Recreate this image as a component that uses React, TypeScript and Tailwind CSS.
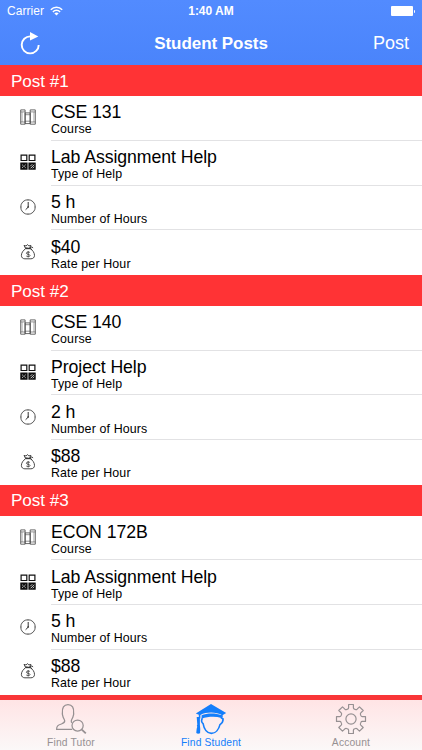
import React from 'react';

const POSTS = [
  { id: 1, course: 'CSE 131', help: 'Lab Assignment Help', hours: '5 h', rate: '$40' },
  { id: 2, course: 'CSE 140', help: 'Project Help', hours: '2 h', rate: '$88' },
  { id: 3, course: 'ECON 172B', help: 'Lab Assignment Help', hours: '5 h', rate: '$88' },
];

function BooksIcon() {
  return (
    <svg className="w-4 h-4" viewBox="0 0 16 16" fill="none" stroke="#444" strokeWidth="0.8">
      <path d="M.7.9h4.4v14.3H.7zM5.1 3.9h5.1v10.7H5.1zM10.2.9h5.1v14.3h-5.1z" />
      <path d="M.7 2.9h4.4M.7 13h4.4M10.2 2.9h5.1M10.2 13h5.1M5.1 5.7h5.1M5.1 12.2h5.1" strokeWidth="0.6" />
      <path d="M2.1 3v10M13.9 3v10" strokeWidth="0.4" />
    </svg>
  );
}

function GridIcon() {
  return (
    <svg className="w-4 h-4" viewBox="0 0 16 16" fill="none" stroke="#111" strokeWidth="1.2">
      <path d="M1.1 1.1h5.7v5.4H1.1zM9.2 1.1h5.7v5.4H9.2z" />
      <path d="M.9 9.1h6.1v6H.9zM9 9.1h6.1v6H9z" fill="#111" />
      <path d="M2.2 10.8l1 .8M5.6 10.8l-1 .8M2.2 13.7l1-.8M5.6 13.7l-1-.8M3.5 12.2h.9M10.2 12.3l2-2M10.6 14.3l3.6-3.6M12.7 14.2l1.6-1.6" stroke="#fff" strokeWidth="0.8" />
    </svg>
  );
}

function ClockIcon() {
  return (
    <svg className="w-4 h-4" viewBox="0 0 16 16" fill="none" stroke="#333" strokeWidth="0.8">
      <circle cx="8" cy="8" r="7.3" />
      <path d="M8.2 3v5.2L5.6 10.7" strokeWidth="1" />
      <circle cx="8.1" cy="8.1" r=".8" fill="#222" stroke="none" />
      <path d="M8 1v1M8 14v1M1 8h1M14 8h1" strokeWidth="0.5" />
    </svg>
  );
}

function MoneyIcon() {
  return (
    <svg className="w-4 h-4" viewBox="0 0 16 16" fill="none" stroke="#333" strokeWidth="0.9">
      <path d="M5.6 4.7C3.2 6.4 1.4 8.8 1.4 11.4c0 2.2 1.5 3.4 3.5 3.4h6c2.1 0 3.6-1.2 3.6-3.4 0-2.7-1.7-5-4.1-6.7z" />
      <path d="M5.6 4.5L4 1.4l2.1.6L7.4.6l1.5 1.3 2-.5-1.5 3zM5.3 3.7l5 .9M9.8 3.8l2.2-1 1 1.3M10 4.4l2.1 1.2" />
      <path d="M9.9 8.5c-.6-.7-3.5-.9-3.5.7 0 1.6 3.6.7 3.6 2.3 0 1.5-2.9 1.4-3.7.5M8.2 7.1v6.2" strokeWidth="0.8" />
    </svg>
  );
}

function FindTutorIcon() {
  return (
    <svg className="w-8 h-8" viewBox="0 0 32 32" fill="none" stroke="#969092" strokeWidth="1.25" strokeLinejoin="round">
      <path d="M17.2 26.4H1.6c0-3.4 1.2-4.3 4.8-5.4 2.2-.8 3.5-1.4 3.3-3.2-.3-1.6-1.4-2.5-1.8-4.5-.4-1.2-.7-1.7-.5-3.1C6.9 4.8 8.8 1.5 13 1.5s6.2 3.3 5.6 8.7c.3 1.4-.1 2-.5 3.1-.4 2-1.5 2.9-1.8 4.5-.1.9.1 1.5.6 1.9" />
      <circle cx="22.6" cy="22.6" r="5.6" />
      <path d="M26.8 26.6l4 3.7" strokeWidth="1.8" />
    </svg>
  );
}

function FindStudentIcon() {
  return (
    <svg className="w-8 h-8" viewBox="0 0 32 32" fill="none" stroke="#147efb">
      <path d="M.8 10.5L16 1l15.2 9-3.8 2.2c-6.3-3.4-15.8-3.5-22-.3v3.7H3.8v-3.8z" fill="#147efb" stroke="none" />
      <path d="M6.6 12.3c5.4-2.4 14.4-2.4 19.8 0v2.6c-5.9-1.6-13.4-1.4-19.8.8z" fill="#147efb" stroke="none" />
      <path d="M1.7 14h3.2v8c.4 2.8.5 5.3.2 8.2-1.4.7-2.8.6-3.8-.1.2-2.6.3-4.6 1-6.3-.6-.8-.4-1.6 0-2z" fill="#147efb" stroke="none" />
      <path d="M7.4 15.2c-1.1 1.7-.9 4 .7 5.4.9 5.3 3.9 9.8 8.3 9.8 4.2 0 7.4-4.1 8.6-8.8 2.2-1.3 3.1-3.2 3.1-5.6l-1.6-1.1c.7-1.2.8-2 .1-3.2" strokeWidth="1.6" />
    </svg>
  );
}

function GearIcon() {
  return (
    <svg className="w-8 h-8" viewBox="0 0 32 32" fill="none" stroke="#969092" strokeWidth="1.2" strokeLinejoin="round">
      <path d="M13.6 1.5h4.8v3.2c0 .6.4 1.2 1 1.4l1 .4c.6.3 1.2.1 1.7-.3l2.4-2.4 3.7 3.7-2.4 2.4c-.4.5-.6 1.1-.3 1.7l.4 1c.2.6.8 1 1.4 1h3.2v4.8h-3.2c-.6 0-1.2.4-1.4 1l-.4 1c-.3.6-.1 1.2.3 1.7l2.4 2.4-3.7 3.7-2.4-2.4c-.5-.4-1.1-.6-1.7-.3l-1 .4c-.6.2-1 .8-1 1.4v3.2h-4.8v-3.2c0-.6-.4-1.2-1-1.4l-1-.4c-.6-.3-1.2-.1-1.7.3l-2.4 2.4-3.7-3.7 2.4-2.4c.4-.5.6-1.1.3-1.7l-.4-1c-.2-.6-.8-1-1.4-1H1.5v-4.8h3.2c.6 0 1.2-.4 1.4-1l.4-1c.3-.6.1-1.2-.3-1.7L3.8 7.5l3.7-3.7 2.4 2.4c.5.4 1.1.6 1.7.3l1-.4c.6-.2 1-.8 1-1.4z" />
      <circle cx="16" cy="16" r="5.1" />
    </svg>
  );
}

const ROWS = [
  { key: 'course', label: 'Course', icon: BooksIcon },
  { key: 'help', label: 'Type of Help', icon: GridIcon },
  { key: 'hours', label: 'Number of Hours', icon: ClockIcon },
  { key: 'rate', label: 'Rate per Hour', icon: MoneyIcon },
] as const;

const TABS = [
  { label: 'Find Tutor', icon: FindTutorIcon, active: false },
  { label: 'Find Student', icon: FindStudentIcon, active: true },
  { label: 'Account', icon: GearIcon, active: false },
];

export default function App() {
  return (
    <div className="w-[422px] h-[750px] flex flex-col overflow-hidden bg-white font-['Liberation_Sans',Arial,sans-serif] text-black">
      {/* --- NAVBAR --- */}
      <header className="h-[65.4px] shrink-0 bg-linear-to-b from-[#528bff] to-[#4a84fb] text-white">
        <div className="h-[22px] grid grid-cols-3 items-center px-[7px] text-[12px]">
          <div className="flex items-center gap-[6px]">
            <span className="text-[12px] tracking-[0.05px]">Carrier</span>
            <svg className="w-[13px] h-[10px]" viewBox="0 0 13 10" fill="none" stroke="white" strokeWidth="1.5">
              <path d="M.8 3.7c3.2-3.4 8.2-3.4 11.4 0M2.9 5.9c2-2.1 5.2-2.1 7.2 0" />
              <path d="M4.3 7.3c1.3-1.2 3.1-1.2 4.4 0L6.5 9.6z" fill="white" stroke="none" />
            </svg>
          </div>
          <span className="text-center font-bold text-[12px]">1:40 AM</span>
          <div className="flex justify-end items-center gap-px">
            <span className="w-[22px] h-[10px] rounded-[1px] bg-white" />
            <span className="w-px h-[3px] rounded-r-full bg-white" />
          </div>
        </div>
        <div className="h-[43px] grid grid-cols-3 items-center pl-5 pr-[13px]">
          <button className="w-5 h-6 mb-[2px]">
            <svg className="w-5 h-6" viewBox="0 0 20 24" fill="none">
              <path d="M10.4 5.4a8.5 8.5 0 1 0 8.3 8.5" stroke="white" strokeWidth="1.9" />
              <path d="M10 .9l8.3 4.7-8.3 4z" fill="white" />
            </svg>
          </button>
          <h1 className="text-center text-[17px] font-bold tracking-[-0.05px] whitespace-nowrap -ml-[7px]">Student Posts</h1>
          <button className="text-right text-[18px]">Post</button>
        </div>
      </header>

      {/* --- POSTS --- */}
      <main className="flex-1 min-h-0 overflow-hidden">
        {POSTS.map((post) => (
          <section key={post.id} className="h-[209.8px] flex flex-col">
            <h2 className="h-[30.6px] pl-[11px] pt-[2px] flex items-center bg-[#ff3335] text-white text-[17.1px] tracking-[-0.05px]">Post #{post.id}</h2>
            {ROWS.map((row) => (
              <div key={row.key} className="flex-1 flex group">
                <div className="w-[51px] pl-5 pb-[2px] flex items-center">
                  <row.icon />
                </div>
                <div className="flex-1 pt-[6.3px] border-b border-[#e2e2e4] group-last:border-b-0">
                  <p className="text-[17.7px] leading-5 tracking-[-0.07px]">{post[row.key]}</p>
                  <p className="text-[12.4px] leading-[15px] tracking-[0.14px]">{row.label}</p>
                </div>
              </div>
            ))}
          </section>
        ))}
        <div className="h-[6px] bg-[#f93638]" />
      </main>

      {/* --- TAB BAR --- */}
      <nav className="h-[50px] shrink-0 grid grid-cols-3 px-[1px] bg-linear-to-b from-[#ffe4e5] to-[#fbf8f8]">
        {TABS.map((tab) => (
          <div key={tab.label} className={`flex flex-col items-center pt-[3px] ${tab.active ? 'text-[#147efb]' : 'text-[#969092]'}`}>
            <tab.icon />
            <span className="text-[10.3px] leading-[16px] tracking-[0.15px]">{tab.label}</span>
          </div>
        ))}
      </nav>
    </div>
  );
}
